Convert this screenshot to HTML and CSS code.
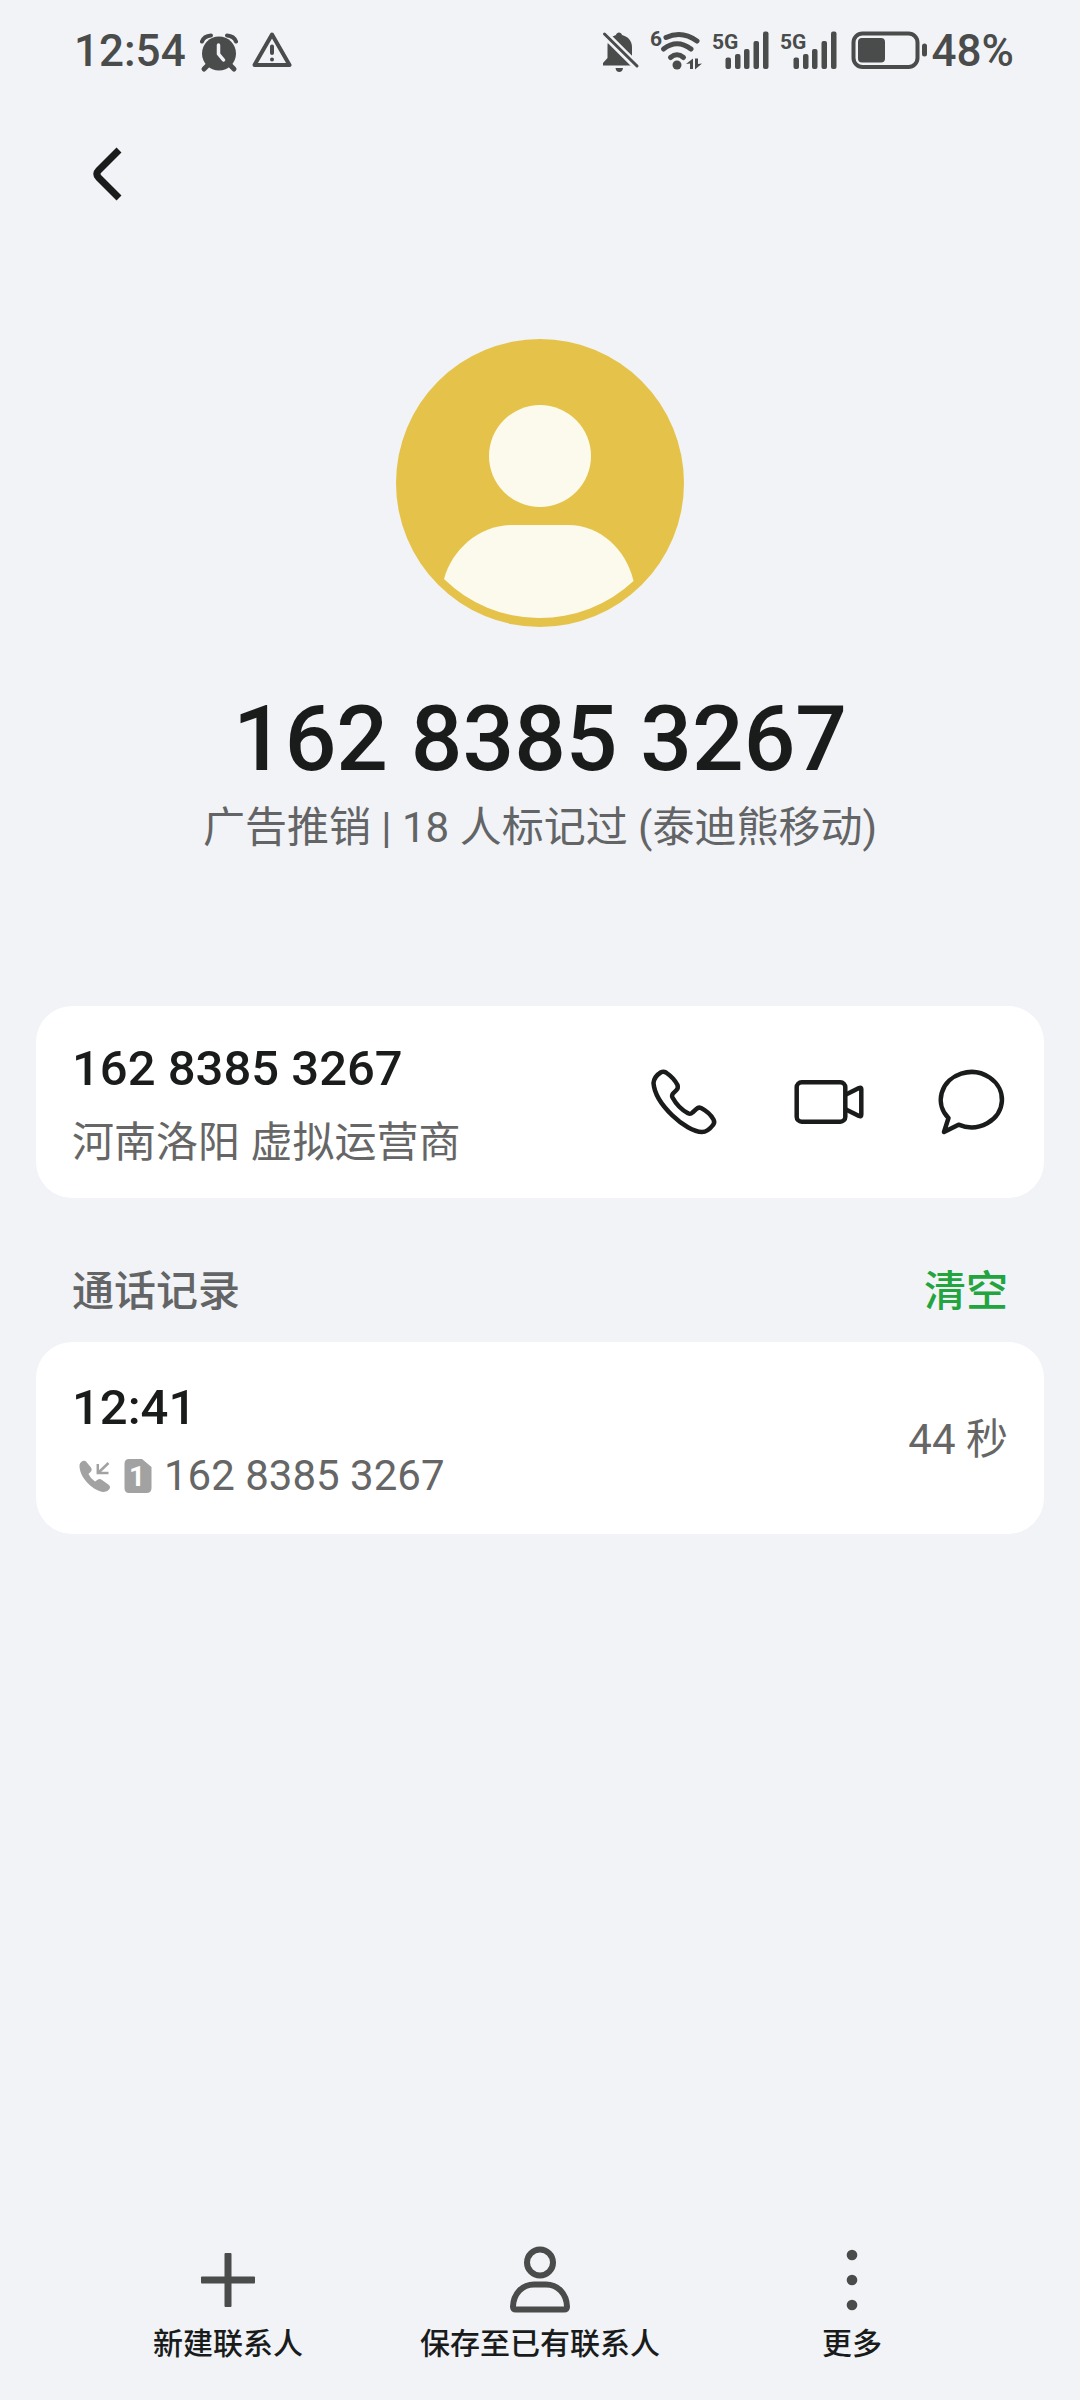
FILE: index.html
```html
<!DOCTYPE html>
<html lang="zh-CN">
<head>
    <meta charset="UTF-8">
    <meta name="viewport" content="width=device-width, initial-scale=1.0">
    <title>162 8385 3267</title>
    <link rel="stylesheet" href="styles.css">
</head>
<body>
    <div class="status-bar">
        <div class="status-group">
            <span class="status-text">12:54</span>
            <!-- alarm -->
            <svg width="38" height="44" viewBox="0 0 38 44" fill="#4a4b4b">
                <circle cx="19" cy="24.5" r="17"/>
                <path d="M8 36L4 40M30 36L34 40" stroke="#4a4b4b" stroke-width="5" stroke-linecap="round"/>
                <path d="M2 12.500Q4 7 11 6.500M27 6.500Q34 7 36 12.500" fill="none" stroke="#4a4b4b" stroke-width="4" stroke-linecap="round"/>
                <path d="M18.500 16V25L23.500 31" fill="none" stroke="#f1f3f7" stroke-width="3.500" stroke-linejoin="round" stroke-linecap="round"/>
            </svg>
            <!-- warning -->
            <svg width="40" height="44" viewBox="0 0 40 44" fill="none" stroke="#4a4b4b" stroke-linejoin="round" stroke-linecap="round">
                <path d="M20 5.500L37.500 36H2.500Z" stroke-width="4"/>
                <path d="M20 17.500V24M20 30.500V30.600" stroke-width="4"/>
            </svg>
        </div>
        <div class="status-group status-right">
            <!-- muted bell -->
            <svg width="38" height="44" viewBox="0 0 38 44">
                <path d="M1 36.500V34L5.500 29V17C5.500 11 9 7.500 14 6C14.500 2.500 19.500 2.500 20 6C26 7.500 30 12 30 18V30L34 36.500Z" fill="#4a4b4b"/>
                <path d="M13.500 39H21Q20.500 43 17.250 43T13.500 39Z" fill="#4a4b4b"/>
                <path d="M0 2.500L37.500 40" stroke="#f1f3f7" stroke-width="8"/>
                <path d="M2.500 5L35 37" stroke="#4a4b4b" stroke-width="3" stroke-linecap="round"/>
            </svg>
            <!-- wifi 6 -->
            <svg width="52" height="56" viewBox="0 -6 52 56" fill="none" stroke="#4a4b4b" stroke-width="5" stroke-linecap="round">
                <path d="M16 8.500Q32 1 47 12"/>
                <path d="M13.500 20Q27 9.500 41 20"/>
                <path d="M20.500 28.500Q27 23 33.500 28.500"/>
                <circle cx="27" cy="36" r="4.500" fill="#4a4b4b" stroke="none"/>
                <path d="M36 35L43 29.500V40H40V34.500ZM45 29.500H48V35L52 34.500L45 40.500Z" fill="#4a4b4b" stroke="none"/>
                <text class="icon-text" x="0" y="17">6</text>
            </svg>
            <!-- signal -->
            <svg width="58" height="56" viewBox="0 -6 58 56" fill="#4a4b4b">
                <text class="icon-text" x="0" y="20">5G</text>
                <rect x="13.500" y="28.500" width="5.500" height="11.500" rx="2"/>
                <rect x="23" y="25" width="5.500" height="15" rx="2"/>
                <rect x="32" y="20" width="5.500" height="20" rx="2"/>
                <rect x="41.500" y="12" width="5.500" height="28" rx="2"/>
                <rect x="51" y="2.500" width="5.500" height="37.500" rx="2"/>
            </svg>
            <svg width="58" height="56" viewBox="0 -6 58 56" fill="#4a4b4b">
                <text class="icon-text" x="0" y="20">5G</text>
                <rect x="13.500" y="28.500" width="5.500" height="11.500" rx="2"/>
                <rect x="23" y="25" width="5.500" height="15" rx="2"/>
                <rect x="32" y="20" width="5.500" height="20" rx="2"/>
                <rect x="41.500" y="12" width="5.500" height="28" rx="2"/>
                <rect x="51" y="2.500" width="5.500" height="37.500" rx="2"/>
            </svg>
            <div class="battery">
                <svg width="80" height="44" viewBox="0 0 80 44" fill="#4a4b4b">
                    <rect x="5.500" y="4.500" width="64" height="33.500" rx="9" fill="none" stroke="#4a4b4b" stroke-width="4"/>
                    <rect x="10" y="9" width="27" height="24.500" rx="4"/>
                    <rect x="74" y="14.500" width="5" height="13" rx="2.500"/>
                </svg>
                <span class="status-text">48%</span>
            </div>
        </div>
    </div>

    <header class="toolbar">
        <button class="icon-button" aria-label="返回">
            <svg width="72" height="72" viewBox="0 0 72 72" fill="none" stroke="#1a1b1b" stroke-width="7" stroke-linejoin="round">
                <path d="M47 12L26.500 32.500Q23 36 26.500 39.500L47 60"/>
            </svg>
        </button>
    </header>

    <main>
        <section class="profile">
            <svg class="avatar" width="288" height="288" viewBox="0 0 288 288">
                <circle cx="144" cy="144" r="144" fill="#e5c34b"/>
                <g fill="#fcfaed">
                    <circle cx="144" cy="117" r="51"/>
                    <path d="M48 240C56 210 84 186 116 186H172C204 186 230 210 237.500 242A137 137 0 0 1 48 240Z"/>
                </g>
            </svg>
            <h1 class="title">162 8385 3267</h1>
            <p class="subtitle">广告推销 | 18 人标记过 (泰迪熊移动)</p>
        </section>

        <section class="card">
            <div class="card-text">
                <div class="primary">162 8385 3267</div>
                <div class="secondary">河南洛阳 虚拟运营商</div>
            </div>
            <div class="actions">
                <button class="icon-button" aria-label="拨打电话">
                    <svg width="72" height="72" viewBox="0 0 72 72" fill="none" stroke="#1a1b1b" stroke-width="4.500" stroke-linejoin="round">
                        <path d="M5.500 17C6 12 10 8 13 6.200Q15.500 5 18 6.500C23 10 27 14 29.500 19Q30.500 22 28.500 24L25 27.500Q23.500 29.500 24.500 31.500C28 38 34 44 40 47.300Q42.500 48.500 44.500 46.500L48.500 42.800Q50.500 41 53 42C58 44.500 63 49 65.500 53.500Q67 56.500 65 59C62 63 58 66 54 66C38 66 7 38 5.500 17Z"/>
                    </svg>
                </button>
                <button class="icon-button" aria-label="视频通话">
                    <svg width="72" height="72" viewBox="0 0 72 72" fill="none" stroke="#1a1b1b" stroke-width="4.500" stroke-linejoin="round">
                        <rect x="4.700" y="16.300" width="48.600" height="39.400" rx="5"/>
                        <path d="M54 28.500L67 22Q69.300 21 69.300 23V48.500Q69.300 51 67 50L54 43.500"/>
                    </svg>
                </button>
                <button class="icon-button" aria-label="发送信息">
                    <svg width="72" height="72" viewBox="0 0 72 72" fill="none" stroke="#1a1b1b" stroke-width="4.500" stroke-linejoin="round">
                        <path d="M12.500 52A30.600 27.600 0 1 1 22.500 58.700L8 66Z"/>
                    </svg>
                </button>
            </div>
        </section>

        <div class="section-header">
            <h2 class="section-title">通话记录</h2>
            <button class="clear-button">清空</button>
        </div>

        <section class="card">
            <div class="card-text call-text">
                <div class="primary">12:41</div>
                <div class="secondary call-line">
                    <!-- incoming call -->
                    <svg width="40" height="36" viewBox="0 0 40 36">
                        <path d="M7.500 7C8 4 12 1.500 14 3.500L19 9.500Q20.500 12 18.500 14L16.500 16Q18.500 20.500 23 23.500L26 21.500Q28 20.500 30 22L37 27Q39 29 37.500 31Q35 34.500 31 34C20 32 7 19 7.500 7Z" fill="#a2a2a2"/>
                        <path d="M36.500 5L26.500 14.500M25.800 6V15H36.500" fill="none" stroke="#a2a2a2" stroke-width="2.500"/>
                    </svg>
                    <!-- SIM 1 -->
                    <svg width="28" height="36" viewBox="0 0 28 36">
                        <path d="M5 1H18L27.500 9V30Q27.500 35 22.500 35H5Q0.500 35 0.500 30V6Q0.500 1 5 1Z" fill="#a2a2a2"/>
                        <text class="sim-text" x="13" y="28">1</text>
                    </svg>
                    <span>162 8385 3267</span>
                </div>
            </div>
            <div class="duration">44 秒</div>
        </section>
    </main>

    <nav class="bottom-bar">
        <button class="bottom-item">
            <svg width="72" height="72" viewBox="0 0 72 72" fill="#4a4b4b">
                <rect x="9" y="32.500" width="54" height="7" rx="1"/>
                <rect x="32.500" y="9" width="7" height="54" rx="1"/>
            </svg>
            新建联系人
        </button>
        <button class="bottom-item">
            <svg width="72" height="72" viewBox="0 0 72 72" fill="none" stroke="#4a4b4b" stroke-width="6">
                <circle cx="36" cy="18.500" r="13"/>
                <path d="M9 62.500C9.500 50 18 40.500 30 40.500H42C54 40.500 62.500 50 63 62.500Q63 65.500 60 65.500H12Q9 65.500 9 62.500Z"/>
            </svg>
            保存至已有联系人
        </button>
        <button class="bottom-item">
            <svg width="72" height="72" viewBox="0 0 72 72" fill="#4a4b4b">
                <circle cx="36" cy="11" r="5.300"/>
                <circle cx="36" cy="36" r="5.300"/>
                <circle cx="36" cy="61" r="5.300"/>
            </svg>
            更多
        </button>
    </nav>
</body>
</html>
```

FILE: styles.css
```css
* {
    box-sizing: border-box;
}

body {
    margin: 0;
    min-height: 100vh;
    display: flex;
    flex-direction: column;
    background-color: #f1f3f7; /* Light grey background */
    color: #1a1b1b;
    font-family: Roboto, "Noto Sans CJK SC", sans-serif;
}

h1, h2, p {
    margin: 0;
}

svg {
    display: block;
    flex-shrink: 0;
}

button {
    padding: 0;
    border: none;
    background: none;
    color: inherit;
    font-family: inherit;
    cursor: pointer;
}

/* Status bar */
.status-bar {
    display: flex;
    justify-content: space-between;
    align-items: center;
    height: 102px;
    padding: 0 66px 0 74px;
}

.status-group {
    display: flex;
    align-items: center;
    gap: 14px;
}

.status-right {
    gap: 10px;
}

.battery {
    display: flex;
    align-items: center;
    gap: 4px;
}

.status-text {
    font-size: 44px;
    font-weight: 500;
    line-height: 60px;
    color: #4a4b4b;
}

.icon-text {
    font-size: 21px;
    font-weight: 700;
    fill: #4a4b4b;
    stroke: none;
}

.sim-text {
    font-size: 28px;
    font-weight: 700;
    fill: #fff;
    text-anchor: middle;
}

/* Toolbar */
.toolbar {
    display: flex;
    align-items: center;
    height: 144px;
    padding: 0 72px;
}

.icon-button {
    width: 72px;
    height: 72px;
}

/* Profile */
.profile {
    display: flex;
    flex-direction: column;
    align-items: center;
    padding: 93px 36px 148px;
    text-align: center;
}

.title {
    margin-top: 57px;
    font-size: 91px;
    font-weight: 500;
    line-height: 110px;
}

.subtitle {
    margin-top: 4px;
    font-size: 42px;
    line-height: 60px;
    color: #636465;
}

/* Cards */
.card {
    display: flex;
    justify-content: space-between;
    align-items: center;
    min-height: 192px;
    margin: 0 36px;
    padding: 0 36px;
    border-radius: 36px;
    background-color: #fff;
}

.card-text {
    display: flex;
    flex-direction: column;
    gap: 14px;
    padding-top: 8px;
}

.call-text {
    gap: 8px;
}

.primary {
    font-size: 49px;
    font-weight: 500;
    line-height: 60px;
}

.secondary {
    font-size: 42px;
    line-height: 60px;
    color: #666;
}

.actions {
    display: flex;
    gap: 72px;
}

.section-header {
    display: flex;
    justify-content: space-between;
    align-items: center;
    height: 144px;
    padding: 44px 72px 0;
}

.section-title,
.clear-button {
    font-size: 42px;
    font-weight: 500;
    line-height: 60px;
}

.section-title {
    color: #636465;
}

.clear-button {
    color: #22a53f; /* Green action */
}

.call-line {
    display: flex;
    align-items: center;
    gap: 12px;
}

.duration {
    padding-top: 4px;
    font-size: 42px;
    line-height: 60px;
    color: #666;
}

/* Bottom bar */
.bottom-bar {
    display: flex;
    margin-top: auto;
    padding: 0 72px 34px;
}

.bottom-item {
    flex: 1;
    display: flex;
    flex-direction: column;
    align-items: center;
    gap: 6px;
    font-size: 30px;
    font-weight: 500;
    line-height: 44px;
}
```
